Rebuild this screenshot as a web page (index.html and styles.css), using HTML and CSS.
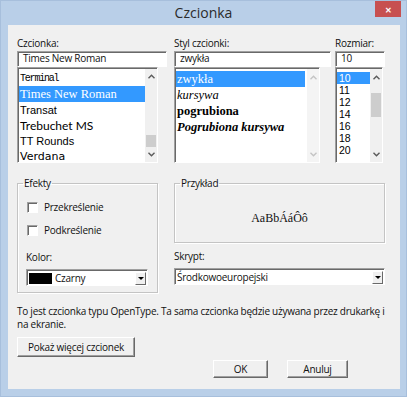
FILE: index.html
```html
<!DOCTYPE html>
<html lang="pl">
<head>
    <meta charset="UTF-8">
    <title>Czcionka</title>
    <link rel="stylesheet" href="styles.css">
</head>
<body>
    <div class="window">
        <div class="titlebar">
            <span></span>
            <span class="title">Czcionka</span>
            <span class="close-wrap"><span class="close">&#x2715;</span></span>
        </div>
        <div class="client">
            <div class="pickers">
                <div class="col col-font">
                    <div class="label">Czcionka:</div>
                    <div class="edit">Times New Roman</div>
                    <div class="list list-font">
                        <div class="items">
                            <div class="item f-terminal">Terminal</div>
                            <div class="item f-times selected">Times New Roman</div>
                            <div class="item f-transat">Transat</div>
                            <div class="item f-trebuchet">Trebuchet MS</div>
                            <div class="item f-rounds">TT Rounds</div>
                            <div class="item f-verdana">Verdana</div>
                        </div>
                        <div class="sb">
                            <div class="arrow"><svg width="7" height="5" viewBox="0 0 7 5"><path d="M0.5 4.2 L3.5 1.2 L6.5 4.2" fill="none" stroke="#5a5a5a" stroke-width="1.4"/></svg></div>
                            <div class="track"><div class="thumb thumb-font"></div></div>
                            <div class="arrow"><svg width="7" height="5" viewBox="0 0 7 5"><path d="M0.5 0.8 L3.5 3.8 L6.5 0.8" fill="none" stroke="#5a5a5a" stroke-width="1.4"/></svg></div>
                        </div>
                    </div>
                </div>
                <div class="col col-style">
                    <div class="label">Styl czcionki:</div>
                    <div class="edit">zwykła</div>
                    <div class="list list-style">
                        <div class="items">
                            <div class="item s-regular selected">zwykła</div>
                            <div class="item s-italic">kursywa</div>
                            <div class="item s-bold">pogrubiona</div>
                            <div class="item s-bolditalic">Pogrubiona kursywa</div>
                        </div>
                        <div class="sb disabled">
                            <div class="arrow"><svg width="7" height="5" viewBox="0 0 7 5"><path d="M0.5 4.2 L3.5 1.2 L6.5 4.2" fill="none" stroke="#c4c4c4" stroke-width="1.4"/></svg></div>
                            <div class="track"></div>
                            <div class="arrow"><svg width="7" height="5" viewBox="0 0 7 5"><path d="M0.5 0.8 L3.5 3.8 L6.5 0.8" fill="none" stroke="#c4c4c4" stroke-width="1.4"/></svg></div>
                        </div>
                    </div>
                </div>
                <div class="col col-size">
                    <div class="label">Rozmiar:</div>
                    <div class="edit">10</div>
                    <div class="list list-size">
                        <div class="items">
                            <div class="item selected">10</div>
                            <div class="item">11</div>
                            <div class="item">12</div>
                            <div class="item">14</div>
                            <div class="item">16</div>
                            <div class="item">18</div>
                            <div class="item">20</div>
                        </div>
                        <div class="sb">
                            <div class="arrow"><svg width="7" height="5" viewBox="0 0 7 5"><path d="M0.5 4.2 L3.5 1.2 L6.5 4.2" fill="none" stroke="#5a5a5a" stroke-width="1.4"/></svg></div>
                            <div class="track"><div class="thumb thumb-size"></div></div>
                            <div class="arrow"><svg width="7" height="5" viewBox="0 0 7 5"><path d="M0.5 0.8 L3.5 3.8 L6.5 0.8" fill="none" stroke="#5a5a5a" stroke-width="1.4"/></svg></div>
                        </div>
                    </div>
                </div>
            </div>

            <div class="middle">
                <fieldset class="group effects">
                    <legend>Efekty</legend>
                    <div class="check first"><span class="box"></span>Przekreślenie</div>
                    <div class="check"><span class="box"></span>Podkreślenie</div>
                    <div class="label color-label">Kolor:</div>
                    <div class="combo color-combo">
                        <span class="swatch"></span>
                        <span class="value">Czarny</span>
                        <span class="drop"><span class="tri"></span></span>
                    </div>
                </fieldset>
                <div class="right">
                    <fieldset class="group sample">
                        <legend>Przykład</legend>
                        <div class="sample-text">AaBbÁáÔô</div>
                    </fieldset>
                    <div class="label script-label">Skrypt:</div>
                    <div class="combo script-combo">
                        <span class="value">Środkowoeuropejski</span>
                        <span class="drop"><span class="tri"></span></span>
                    </div>
                </div>
            </div>

            <p class="info">To jest czcionka typu OpenType. Ta sama czcionka będzie używana przez drukarkę i na ekranie.</p>

            <button class="btn more">Pokaż więcej czcionek</button>

            <div class="actions">
                <button class="btn ok">OK</button>
                <button class="btn cancel">Anuluj</button>
            </div>
        </div>
    </div>
</body>
</html>
```

FILE: styles.css
```css
body { margin: 0; font-family: "Open Sans", "Noto Sans", sans-serif; font-size: 10px; letter-spacing: -0.25px; color: #111; }

.window { width: 407px; height: 397px; background: #b9cfe8; box-sizing: border-box; border: 1px solid #a7bfdc; }
.titlebar { height: 24px; display: grid; grid-template-columns: 1fr auto 1fr; align-items: start; }
.title { font-size: 14px; letter-spacing: 0; color: #2b2b2b; line-height: 24px; }
.close-wrap { display: flex; justify-content: flex-end; padding-right: 5px; }
.close { width: 26px; height: 16px; background: #c75050; color: #fff; font-size: 8px; font-weight: bold; letter-spacing: 0; display: flex; align-items: center; justify-content: center; }

.client { margin: 0 6px 0 7px; height: 364px; box-sizing: border-box; background: #f0f0f0; padding: 11px 15px 0 9px; }

/* top pickers */
.pickers { display: flex; }
.col-font { width: 150px; margin-right: 7px; }
.col-style { width: 157px; margin-right: 4px; }
.col-size { width: 50px; }
.label { height: 15px; line-height: 14px; }

.edit { height: 16px; box-sizing: border-box; background: #fff; line-height: 13px; padding-left: 5px;
    border-top: 1px solid #a0a0a0; border-left: 1px solid #a0a0a0; border-right: 1px solid #fff; border-bottom: 1px solid #fff;
    box-shadow: inset 1px 1px 0 #696969; }

.list { height: 96px; box-sizing: border-box; background: #fff; display: flex; overflow: hidden;
    border-top: 1px solid #a0a0a0; border-left: 1px solid #a0a0a0; border-right: 1px solid #fff; border-bottom: 1px solid #fff;
    box-shadow: inset 1px 1px 0 #696969; padding: 1px 0 0 1px; }
.list-font { width: 141px; }
.list-style { width: 146px; }
.list-size { width: 48px; }
.items { flex: 1; overflow: hidden; letter-spacing: 0; }
.list-style .items { padding-top: 2px; margin-right: 2px; }
.list-size .items { padding-top: 3px; }
.item { white-space: nowrap; color: #000; padding-left: 1px; }
.item.selected { background: #3399ff; color: #fff; }

.f-terminal { height: 17px; line-height: 19px; font-family: "Liberation Mono", monospace; font-size: 10px; letter-spacing: -1.2px; }
.f-times { height: 16px; line-height: 16px; font-family: "Liberation Serif", serif; font-size: 12.5px; }
.f-transat { height: 16px; line-height: 16px; font-family: "Liberation Sans", sans-serif; font-size: 11px; }
.f-trebuchet { height: 16px; line-height: 16px; font-family: "Lato", sans-serif; font-size: 12px; }
.f-rounds { height: 15px; line-height: 15px; font-family: "Liberation Sans", sans-serif; font-size: 11px; }
.f-verdana { height: 16px; line-height: 16px; font-family: "DejaVu Sans", sans-serif; font-size: 11px; }

.list-style .item { height: 16px; line-height: 16px; font-family: "Liberation Serif", serif; font-size: 12.5px; }
.s-italic { font-style: italic; }
.s-bold { font-weight: bold; }
.s-bolditalic { font-weight: bold; font-style: italic; }

.list-size .item { height: 12px; line-height: 12px; font-family: "Liberation Sans", sans-serif; font-size: 10.5px; padding-left: 2px; }

.sb { width: 12px; background: #f0f0f0; display: flex; flex-direction: column; }
.sb.disabled { background: #f4f4f4; }
.arrow { height: 16px; display: flex; align-items: center; justify-content: center; }
.track { flex: 1; }
.thumb { background: #cdcdcd; margin: 0 1px; }
.thumb-font { height: 12px; margin-top: 51px; }
.thumb-size { height: 24px; margin-top: 8px; }

/* middle */
.middle { display: flex; align-items: flex-start; margin-top: 13px; }
.group { margin: 0; padding: 0; min-width: 0; border: 1px solid #c4c4c4; box-shadow: inset 1px 1px 0 #fff, 1px 1px 0 #fff; box-sizing: border-box; }
.group legend { padding: 0 1px; margin-left: 5px; line-height: 14px; }
.effects { width: 141px; margin-right: 16px; padding: 0 9px 6px 8px; }
.effects legend { margin-left: -3px; }
.check { height: 14px; line-height: 14px; display: flex; align-items: center; margin-top: 9px; }
.check.first { margin-top: 10px; }
.box { width: 9px; height: 9px; background: #fff; margin: 0 6px 0 1px;
    border-top: 1px solid #a0a0a0; border-left: 1px solid #a0a0a0; border-right: 1px solid #fff; border-bottom: 1px solid #fff;
    box-shadow: inset 1px 1px 0 #696969; }
.color-label { margin-top: 13px; }

.combo { height: 17px; box-sizing: border-box; background: #fff; display: flex; align-items: center; margin-top: 4px;
    border-top: 1px solid #a0a0a0; border-left: 1px solid #a0a0a0; border-right: 1px solid #fff; border-bottom: 1px solid #fff;
    box-shadow: inset 1px 1px 0 #696969; padding: 1px 1px 0 2px; }
.combo .value { flex: 1; line-height: 13px; }
.swatch { width: 23px; height: 11px; background: #000; margin-right: 3px; }
.drop { width: 11px; height: 13px; box-sizing: border-box; background: #f0f0f0; display: flex; align-items: center; justify-content: center;
    border-top: 1px solid #fff; border-left: 1px solid #fff; border-right: 1px solid #696969; border-bottom: 1px solid #696969; }
.tri { width: 0; height: 0; border-left: 3px solid transparent; border-right: 3px solid transparent; border-top: 3px solid #000; }

.right { width: 211px; }
.sample { height: 67px; display: flex; justify-content: center; }
.sample-text { font-family: "Liberation Serif", serif; font-size: 12px; letter-spacing: 0; line-height: 14px; padding-top: 21px; text-align: center; width: 100%; }
.script-label { margin-top: 6px; }
.script-combo { margin-top: 4px; }

/* bottom */
.info { margin: 12px 0 0; line-height: 13px; width: 376px; }
.btn { font-family: inherit; font-size: inherit; letter-spacing: inherit; color: #111; background: #f0f0f0; padding: 0; display: block;
    border-top: 1px solid #fff; border-left: 1px solid #fff; border-right: 1px solid #696969; border-bottom: 1px solid #696969;
    box-shadow: inset -1px -1px 0 #a0a0a0; }
.more { width: 118px; height: 20px; margin-top: 6px; }
.actions { display: flex; justify-content: flex-end; margin: 3px 37px 0 0; gap: 19px; }
.ok { width: 55px; height: 18px; }
.cancel { width: 61px; height: 18px; }
```
